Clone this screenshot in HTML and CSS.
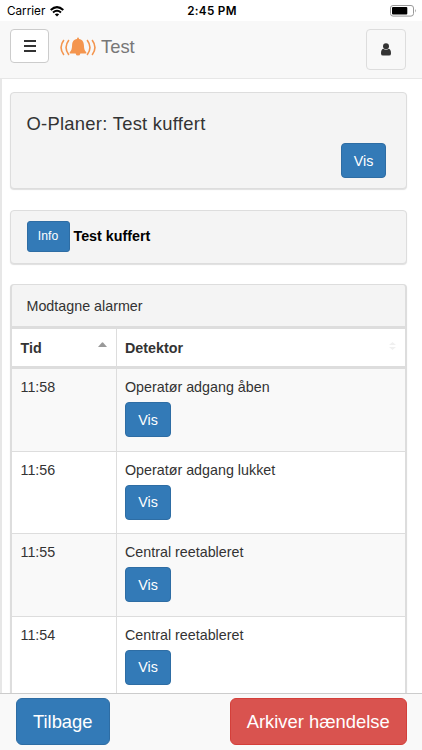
FILE: index.html
```html
<!DOCTYPE html>
<html lang="da">
<head>
<meta charset="utf-8">
<meta name="viewport" content="width=device-width, initial-scale=1">
<title>Test</title>
<link rel="stylesheet" href="styles.css">
</head>
<body>
<div class="status">
  <div class="carrier"><span>Carrier</span>
    <svg width="14" height="11" viewBox="0 0 14 11"><g fill="none" stroke="#000" stroke-width="2"><path d="M.7 4Q7-1.8 13.3 4"/><path d="M3 6.6Q7 3 11 6.6"/></g><path d="M4.8 8.3Q7 6.5 9.2 8.3L7 10.6Z"/></svg>
  </div>
  <div class="clock">2:45 PM</div>
  <svg class="battery" width="27" height="12" viewBox="0 0 27 12"><rect x=".5" y=".5" width="23" height="10.6" rx="2.5" fill="#fff" stroke="#999"/><rect x="2" y="2" width="15.3" height="7.6" rx="1" fill="#000"/><path d="M25 4Q26.8 5.8 25 7.6Z" fill="#999"/></svg>
</div>
<header class="navbar">
  <div class="menu"><svg width="12" height="12" viewBox="0 0 12 12"><path d="M0 1h12M0 6h12M0 11h12" stroke="#333" stroke-width="2"/></svg></div>
  <div class="brand">
    <svg width="36" height="20" viewBox="0 0 36 20"><g fill="none" stroke="#f4954e" stroke-width="1.6"><path d="M3.9 3Q-1.8 10.5 3.9 18M8.9 3Q3.2 10.5 8.9 18M27.1 3Q32.8 10.5 27.1 18M32.1 3Q37.8 10.5 32.1 18"/></g><path fill="#f4954e" d="M17 2Q17 .6 18 .6T19 2C22.4 2.5 23.8 5 23.9 8C24 11.8 24.6 13.6 26.3 15.2V16.4H20.4Q20 18.6 18 18.6T15.6 16.4H9.7V15.2C11.4 13.6 12 11.8 12.1 8C12.2 5 13.6 2.5 17 2Z"/></svg>
    <span>Test</span>
  </div>
  <div class="user"><svg width="10" height="13" viewBox="0 0 10 13"><circle cx="5" cy="3.2" r="3" fill="#333"/><path d="M2.2 5.7Q5 8 7.8 5.7Q10 6.3 10 10.4Q10 12.6 8 12.6H2Q0 12.6 0 10.4Q0 6.3 2.2 5.7Z" fill="#333"/></svg></div>
</header>
<main class="content">
  <section class="panel plan"><h1>O-Planer: Test kuffert</h1><button class="btn">Vis</button></section>
  <section class="panel info"><button class="btn small">Info</button><b>Test kuffert</b></section>
  <section class="panel alarms">
    <div class="heading">Modtagne alarmer</div>
    <div class="row head"><div class="cell">Tid<svg class="sort" width="9" height="5" viewBox="0 0 9 5"><path d="M0 5L3.7.7Q4.5 0 5.3.7L9 5Z" fill="#999"/></svg></div><div class="cell">Detektor<svg class="sort" width="7" height="8" viewBox="0 0 7 8"><path d="M0 3L3.5 0L7 3ZM0 5L3.5 8L7 5Z" fill="#f0f0f0"/></svg></div></div>
    <div class="row odd"><div class="cell">11:58</div><div class="cell"><span>Operatør adgang åben</span><button class="btn">Vis</button></div></div>
    <div class="row"><div class="cell">11:56</div><div class="cell"><span>Operatør adgang lukket</span><button class="btn">Vis</button></div></div>
    <div class="row odd"><div class="cell">11:55</div><div class="cell"><span>Central reetableret</span><button class="btn">Vis</button></div></div>
    <div class="row"><div class="cell">11:54</div><div class="cell"><span>Central reetableret</span><button class="btn">Vis</button></div></div>
  </section>
</main>
<footer class="footer"><button class="btn large">Tilbage</button><button class="btn large danger">Arkiver hændelse</button></footer>
</body>
</html>
```
FILE: styles.css
```css
* { box-sizing: border-box; }
body { margin: 0; height: 750px; overflow: hidden; display: flex; flex-direction: column; background: #fff; color: #333; font: 14.3px/20px "Liberation Sans", Arial, sans-serif; }
svg { display: block; flex: none; }
.status { height: 21px; flex: none; display: grid; grid-template-columns: 1fr auto 1fr; align-items: center; padding: 1px 5px 0 7px; color: #000; font: 11.7px/20px Inter, sans-serif; }
.carrier { display: flex; align-items: center; gap: 5px; }
.clock { font-weight: 600; letter-spacing: .3px; }
.battery { justify-self: end; }
.navbar { height: 58px; flex: none; display: flex; align-items: flex-start; padding: 8px 16px 0 10px; background: #f8f8f8; border-bottom: 1px solid #e7e7e7; }
.menu { width: 39px; height: 34px; display: grid; place-items: center; background: #fff; border: 1px solid #ccc; border-radius: 4px; }
.brand { display: flex; align-items: center; margin: 8px 0 0 11px; gap: 5px; color: #777; font-size: 18.4px; }
.user { margin-left: auto; width: 40.5px; height: 41px; display: grid; place-items: center; border: 1px solid #ddd; border-radius: 4px; }
.content { flex: 1; min-height: 0; overflow: hidden; padding: 13px 15.5px 0 8px; border-left: 2px solid #e7e7e7; }
.panel { border: 1px solid #ddd; border-radius: 4px; background: #f4f4f4; box-shadow: 0 1px 1px rgba(0,0,0,.13); margin-bottom: 21px; }
.btn { display: block; margin: 0; padding: 0; width: 46px; height: 35px; background: #337ab7; border: 1px solid #2e6da4; border-radius: 4px; color: #fff; font: inherit; text-align: center; }
.plan { height: 97px; padding: 20px 19.5px 0 15.5px; }
h1 { margin: 0; font-size: 18.4px; line-height: 22px; font-weight: 400; letter-spacing: .27px; }
.plan .btn { margin: 8px 0 0 auto; width: 45px; }
.info { height: 54px; margin-bottom: 20px; padding: 0 15.5px 2px; display: flex; align-items: center; gap: 4px; color: #000; }
.btn.small { width: 43px; height: 31px; font-size: 12.2px; border-radius: 3px; }
.alarms { margin-bottom: 0; border-right-width: 2px; border-left-width: 2px; }
.heading { height: 41px; padding: 11px 14.5px 0; }
.row { display: grid; grid-template-columns: 104.5px 1fr; height: 82.5px; border-bottom: 1px solid #ddd; background: #fff; }
.odd { background: #f9f9f9; }
.cell { padding: 8px 8.5px 0; border-right: 1px solid #ddd; }
.cell + .cell { border-right: 0; }
.cell .btn { margin-top: 5px; }
.cell span { display: block; }
.head { height: 43px; border-top: 3px solid #ddd; border-bottom: 3px solid #ddd; font-weight: 700; }
.head .cell { display: flex; justify-content: space-between; padding-top: 9px; }
.sort { margin-top: 4px; }
.footer { height: 57px; flex: none; display: flex; align-items: flex-start; justify-content: space-between; padding: 4px 15.5px 0; border-top: 1px solid #ccc; background: #f9f9f9; }
.btn.large { width: 94.5px; height: 47px; font-size: 18.4px; border-radius: 6px; }
.btn.danger { width: 176.5px; background: #d9534f; border-color: #d43f3a; }
```
